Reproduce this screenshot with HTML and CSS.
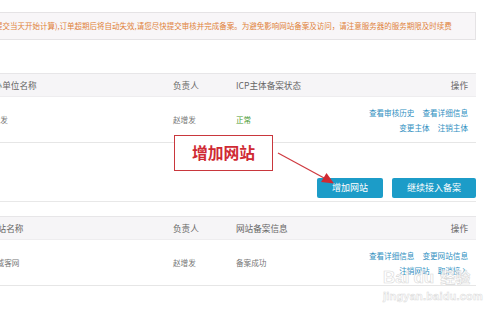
FILE: index.html
```html
<!DOCTYPE html>
<html lang="zh-CN">
<head>
<meta charset="utf-8">
<link rel="stylesheet" href="styles.css">
</head>
<body>
<div class="page">
  <div class="notice">提交当天开始计算),订单超期后将自动失效,请您尽快提交审核并完成备案。为避免影响网站备案及访问，请注意服务器的服务期限及时续费</div>

  <div class="table t1">
    <div class="row head">
      <div class="cell">主办单位名称</div>
      <div class="cell">负责人</div>
      <div class="cell">ICP主体备案状态</div>
      <div class="cell ops">操作</div>
    </div>
    <div class="row body">
      <div class="cell">赵增发</div>
      <div class="cell">赵增发</div>
      <div class="cell ok">正常</div>
      <div class="cell ops links">
        <div class="line"><a>查看审核历史</a><a>查看详细信息</a></div>
        <div class="line"><a>变更主体</a><a>注销主体</a></div>
      </div>
    </div>
  </div>

  <div class="actions">
    <button class="btn">增加网站</button>
    <button class="btn">继续接入备案</button>
  </div>

  <div class="table t2">
    <div class="row head">
      <div class="cell first">网站名称</div>
      <div class="cell">负责人</div>
      <div class="cell">网站备案信息</div>
      <div class="cell ops">操作</div>
    </div>
    <div class="row body">
      <div class="cell first">赵威客网</div>
      <div class="cell">赵增发</div>
      <div class="cell">备案成功</div>
      <div class="cell ops links">
        <div class="line"><a>查看详细信息</a><a>变更网站信息</a></div>
        <div class="line"><a>注销网站</a><a>取消接入</a></div>
      </div>
    </div>
  </div>
</div>

<div class="callout">增加网站</div>
<svg class="arrow" width="500" height="313" viewBox="0 0 500 313">
  <line x1="278" y1="153" x2="325" y2="178.5" stroke="#cf3a40" stroke-width="1.2"/>
  <polygon points="334,183.5 321,182 326.5,173" fill="#cf2a33"/>
</svg>

<div class="watermark">
  <div class="wm-logo"><span>Bai</span><span class="paw">du</span><span class="cn">经验</span></div>
  <div class="wm-url">jingyan.baidu.com</div>
</div>
</body>
</html>
```

FILE: styles.css
```css
* { box-sizing: border-box; }

html, body {
  margin: 0;
  padding: 0;
  width: 500px;
  height: 313px;
  overflow: hidden;
  background: #ffffff;
  font-family: "Noto Sans CJK SC", "Noto Sans", sans-serif;
}

.page {
  width: 491px;
  margin-left: -15px;
  padding-top: 12px;
}

.notice {
  height: 28px;
  background: #f8f6f8;
  border: 1px solid #e5e3e5;
  color: #e0823a;
  font-size: 7.5px;
  line-height: 26px;
  padding-left: 9px;
  white-space: nowrap;
  overflow: hidden;
}

.table {
  width: 491px;
}

.t1 { margin-top: 33px; }
.t2 { margin-top: 14px; }

.row {
  display: grid;
  grid-template-columns: 188px 63px 1fr auto;
  align-items: center;
  padding-right: 8px;
}

.row.head {
  height: 24px;
  background: #f6f5f7;
  border-top: 1px solid #e7e6e8;
  border-bottom: 1px solid #eeedef;
  color: #666;
  font-size: 8.6px;
}

.row.body {
  height: 46px;
  border-bottom: 1px solid #e6e6e6;
  color: #777;
  font-size: 7.6px;
}

.cell { white-space: nowrap; }

.t2 .first { padding-left: 4px; }

.ops { text-align: right; }

.ok { color: #4b9b33; }

.links {
  display: flex;
  flex-direction: column;
  align-items: flex-end;
  gap: 4px;
  font-size: 7.6px;
  line-height: 11px;
  padding-top: 1px;
}

.links .line {
  display: flex;
  gap: 8px;
}

.links a {
  color: #2f8fbf;
}

.actions {
  display: flex;
  justify-content: flex-end;
  gap: 9px;
  margin-top: 35px;
  padding-right: 0;
  padding-bottom: 3px;
  border-bottom: 1px solid #e8e8e8;
}

.btn {
  height: 20px;
  padding: 0 15px;
  border: none;
  border-radius: 2px;
  background: #1c9cc8;
  color: #ffffff;
  font-family: "Noto Sans CJK SC", sans-serif;
  font-size: 9px;
  line-height: 20px;
}

.callout {
  position: absolute;
  left: 174px;
  top: 135px;
  width: 99px;
  height: 36px;
  border: 1px solid #c9373d;
  background: #ffffff;
  color: #cf2a33;
  font-size: 15.8px;
  font-weight: bold;
  line-height: 34px;
  text-align: center;
}

.arrow {
  position: absolute;
  left: 0;
  top: 0;
  pointer-events: none;
}

.watermark {
  position: absolute;
  left: 383px;
  top: 268px;
  color: rgba(255, 255, 255, 0.85);
  pointer-events: none;
}

.wm-logo {
  display: flex;
  align-items: baseline;
  gap: 4px;
  font-family: "Liberation Sans", sans-serif;
  font-weight: bold;
  font-size: 17px;
  line-height: 18px;
  -webkit-text-stroke: 0.6px #d9d9d9;
}

.wm-logo .cn {
  font-family: "Noto Sans CJK SC", sans-serif;
  font-size: 15px;
  margin-left: 2px;
}

.wm-url {
  margin-top: 3px;
  font-family: "Liberation Sans", sans-serif;
  font-weight: bold;
  font-size: 11px;
  letter-spacing: 0.2px;
  -webkit-text-stroke: 0.5px #dadada;
}
```
